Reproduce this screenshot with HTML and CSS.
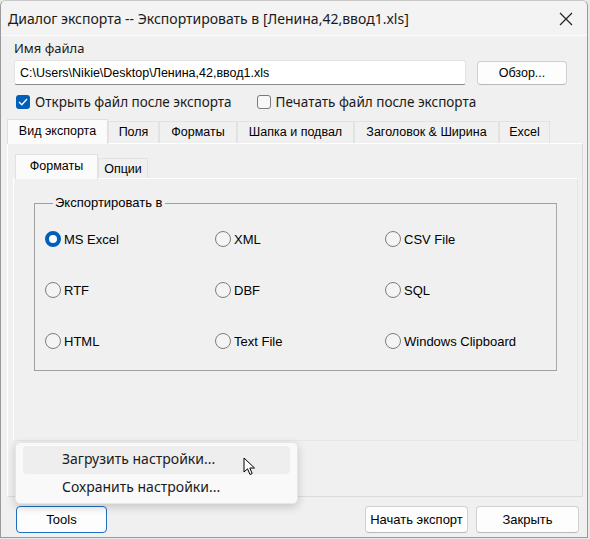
FILE: index.html
```html
<!DOCTYPE html>
<html lang="ru">
  <head>
    <meta charset="utf-8" />
    <title>Диалог экспорта</title>
    <link rel="stylesheet" href="styles.css">
  </head>
  <body>
    <div class="window">
      <div class="titlebar">
        <span class="title">Диалог экспорта -- Экспортировать в [Ленина,42,ввод1.xls]</span>
        <svg class="close" width="14" height="14" viewBox="0 0 14 14">
          <path d="M1 1 L13 13 M13 1 L1 13" stroke="#222" stroke-width="1.2" fill="none"/>
        </svg>
      </div>

      <div class="client">
        <div class="file-label">Имя файла</div>
        <div class="file-row">
          <div class="textbox">C:\Users\Nikie\Desktop\Ленина,42,ввод1.xls</div>
          <button type="button" class="btn browse">Обзор...</button>
        </div>
        <div class="check-row">
          <span class="check on">
            <svg width="10" height="8" viewBox="0 0 10 8"><path d="M1 4 L3.8 6.8 L9 1" stroke="#fff" stroke-width="1.3" fill="none"/></svg>
          </span>
          <span class="check-text">Открыть файл после экспорта</span>
          <span class="check off second"></span>
          <span class="check-text">Печатать файл после экспорта</span>
        </div>

        <!-- outer tab control -->
        <div class="tabs">
          <div class="tab-strip">
            <span class="tab active">Вид экспорта</span>
            <span class="tab w-fields">Поля</span>
            <span class="tab w-formats">Форматы</span>
            <span class="tab w-header">Шапка и подвал</span>
            <span class="tab w-title">Заголовок &amp; Ширина</span>
            <span class="tab w-excel">Excel</span>
          </div>
          <div class="tab-panel">
            <!-- inner tab control -->
            <div class="inner-strip">
              <span class="tab active inner-first">Форматы</span>
              <span class="tab inner-second">Опции</span>
            </div>
            <div class="inner-panel">
              <fieldset class="group">
                <legend>Экспортировать в</legend>
                <div class="radio-grid">
                  <label class="radio"><span class="dot on"></span>MS Excel</label>
                  <label class="radio"><span class="dot"></span>XML</label>
                  <label class="radio"><span class="dot"></span>CSV File</label>
                  <label class="radio"><span class="dot"></span>RTF</label>
                  <label class="radio"><span class="dot"></span>DBF</label>
                  <label class="radio"><span class="dot"></span>SQL</label>
                  <label class="radio"><span class="dot"></span>HTML</label>
                  <label class="radio"><span class="dot"></span>Text File</label>
                  <label class="radio"><span class="dot"></span>Windows Clipboard</label>
                </div>
              </fieldset>
            </div>
          </div>
        </div>

        <div class="footer">
          <button type="button" class="btn tools">Tools</button>
          <div class="footer-right">
            <button type="button" class="btn">Начать экспорт</button>
            <button type="button" class="btn">Закрыть</button>
          </div>
        </div>
      </div>

      <!-- popup menu over the tools button -->
      <div class="menu">
        <div class="menu-item hover">Загрузить настройки...</div>
        <div class="menu-item">Сохранить настройки...</div>
      </div>
      <svg class="cursor" width="14" height="20" viewBox="0 0 14 20">
        <path d="M1 1 L1 15 L4.5 11.8 L7 17.5 L9.2 16.5 L6.8 11 L11.5 11 Z" fill="#fff" stroke="#000" stroke-width="1"/>
      </svg>
    </div>
  </body>
</html>
```

FILE: styles.css
```css
body {
  margin: 0;
  background: #e8e8e8;
  font-family: "Liberation Sans", Arial, sans-serif;
}
/* The dialog window */
.window {
  position: relative;
  width: 586px;
  height: 536px;
  border: 1px solid #9a9a9a;
  border-top-color: #c8c8c8;
  border-radius: 6px 6px 0 0;
  background: #f0f0f0;
  overflow: hidden;
}
.titlebar {
  height: 34px;
  display: flex;
  align-items: center;
  justify-content: space-between;
  padding: 0 14px 0 7px;
  background: #f3f3f3;
  border-bottom: 1px solid #fbfbfb;
  font-family: "Noto Sans", sans-serif;
  font-size: 14px;
  color: #1a1a1a;
}
.close {
  margin-top: 1px;
}
.client {
  padding: 4px 0 0 0;
  font-size: 12.5px;
  color: #000;
}
.file-label {
  margin-left: 13px;
  height: 17px;
  line-height: 17px;
  font-family: "Noto Sans", sans-serif;
  font-size: 13px;
  color: #1a1a1a;
}
.file-row {
  display: flex;
  align-items: center;
  margin: 3px 0 0 13px;
}
.textbox {
  width: 452px;
  height: 25px;
  line-height: 24px;
  padding-left: 5px;
  background: #fff;
  border: 1px solid #e4e4e4;
  border-bottom: 1px solid #8a8a8a;
  border-radius: 3px;
  box-sizing: border-box;
  font-size: 12.5px;
}
.btn {
  height: 26px;
  background: #fdfdfd;
  border: 1px solid #d0d0d0;
  border-bottom-color: #b8b8b8;
  border-radius: 4px;
  font-family: "Liberation Sans", Arial, sans-serif;
  font-size: 12.5px;
  color: #000;
  padding: 0;
}
.browse {
  width: 90px;
  height: 24px;
  margin-left: 11px;
}
.check-row {
  display: flex;
  align-items: center;
  margin: 8px 0 0 15px;
  height: 18px;
  font-family: "Noto Sans", sans-serif;
  font-size: 13.5px;
  color: #1a1a1a;
}
.check {
  width: 14px;
  height: 14px;
  box-sizing: border-box;
  border-radius: 3px;
  display: flex;
  align-items: center;
  justify-content: center;
  margin-right: 5px;
}
.check.on {
  background: #005fb8;
}
.check.off {
  border: 1px solid #7a7a7a;
  background: #f7f7f7;
}
.check.second {
  margin-left: 25px;
}
/* outer tabs */
.tabs {
  margin: 7px 0 0 6px;
  width: 576px;
}
.tab-strip {
  display: flex;
  align-items: flex-end;
  height: 25px;
}
.tab {
  height: 22px;
  line-height: 21px;
  box-sizing: border-box;
  border: 1px solid #e2e2e2;
  border-bottom: none;
  background: #f0f0f0;
  text-align: center;
  font-size: 12.5px;
}
.tab.active {
  height: 25px;
  line-height: 22px;
  background: #fbfbfb;
  border-color: #e0e0e0;
  margin-bottom: -1px;
  position: relative;
}
.tab-strip .tab.active { width: 101px; }
.w-fields { width: 51px; }
.w-formats { width: 78px; }
.w-header { width: 117px; }
.w-title { width: 145px; }
.w-excel { width: 51px; }
.tab-panel {
  height: 354px;
  background: #f0f0f0;
  border: 1px solid #dadada;
  border-top-color: #fff;
  border-left-color: #fff;
  box-sizing: border-box;
  padding: 10px 0 0 5px;
}
.inner-strip {
  display: flex;
  align-items: flex-end;
  height: 24px;
  margin-left: 2px;
}
.inner-first {
  width: 83px;
}
.inner-second {
  width: 50px;
  height: 20px;
}
.inner-panel {
  width: 565px;
  height: 263px;
  box-sizing: border-box;
  border: 1px solid #e6e6e6;
  border-top-color: #fff;
  border-left-color: #fff;
  padding: 17px 0 0 20px;
}
.group {
  margin: 0;
  width: 523px;
  height: 175px;
  box-sizing: border-box;
  border: 1px solid #a0a0a0;
  border-right-color: #a8a8a8;
  padding: 0 0 0 10px;
}
.group legend {
  padding: 0 2px;
  margin-left: 8px;
  font-size: 13px;
  line-height: 14px;
}
.radio-grid {
  display: grid;
  grid-template-columns: 170px 170px 170px;
  grid-auto-rows: 51px;
  margin-top: 20px;
}
.radio {
  display: flex;
  align-items: center;
  height: 18px;
  font-size: 13px;
}
.dot {
  width: 16px;
  height: 16px;
  box-sizing: border-box;
  border: 1px solid #7d7d7d;
  border-radius: 50%;
  background: #f4f4f4;
  margin-right: 3px;
}
.dot.on {
  border: 4.5px solid #005fb8;
  background: #fff;
}
.footer {
  display: flex;
  justify-content: space-between;
  align-items: center;
  margin: 9px 0 0 15px;
  width: 563px;
}
.tools {
  width: 91px;
  height: 27px;
  border: 1px solid #1f6fc0;
  border-radius: 4px;
  font-size: 13px;
}
.footer-right {
  display: flex;
  gap: 8px;
}
.footer-right .btn {
  width: 103px;
  height: 27px;
  font-size: 13px;
}
/* popup menu */
.menu {
  position: absolute;
  left: 14px;
  top: 441px;
  width: 283px;
  height: 62px;
  box-sizing: border-box;
  padding: 3px 7px;
  background: #f9f9f9;
  border: 1px solid #e6e6e6;
  border-radius: 5px;
  box-shadow: 0 3px 10px rgba(0, 0, 0, 0.18);
  font-family: "Noto Sans", sans-serif;
  font-size: 14px;
  color: #1a1a1a;
}
.menu-item {
  height: 28px;
  line-height: 26px;
  padding-left: 39px;
  border-radius: 4px;
}
.menu-item.hover {
  background: #eeeeee;
}
.cursor {
  position: absolute;
  left: 242px;
  top: 456px;
}
```
